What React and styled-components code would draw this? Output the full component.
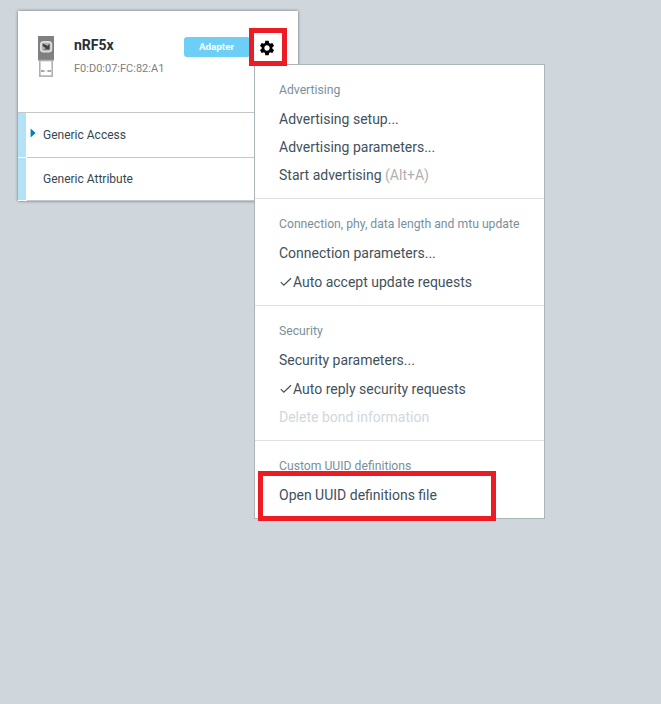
import React from 'react';
import styled, { createGlobalStyle } from 'styled-components';
import { MdSettings } from 'react-icons/md';

const GlobalStyle = createGlobalStyle`
  * { box-sizing: border-box; }
  body {
    margin: 0;
    background: #cfd7dd;
    font-family: Roboto, "Liberation Sans", sans-serif;
    color: #3f515b;
  }
`;

const Page = styled.main`
  width: 661px;
  height: 704px;
  padding: 11px 18px;
  overflow: hidden;
  background: #cfd7dd;
`;

const Card = styled.section`
  position: relative;
  width: 280px;
  height: 190px;
  background: #fff;
  box-shadow: 0 0 3px rgba(0, 0, 0, 0.5);
`;

const CardHeader = styled.header`
  display: flex;
  align-items: flex-start;
  height: 101px;
  padding: 25px 11px 0 20px;
`;

const DeviceInfo = styled.div`
  width: 110px;
  margin: -1px 0 0 20px;
`;

const DeviceName = styled.div`
  font-size: 14px;
  font-weight: 700;
  line-height: 20px;
  color: #263238;
`;

const DeviceAddress = styled.div`
  margin-top: 5px;
  font-size: 11px;
  line-height: 18px;
  white-space: nowrap;
  color: #808080;
`;

const Badge = styled.span`
  flex: none;
  width: 66px;
  height: 20px;
  margin-top: 1px;
  padding-right: 1px;
  border-radius: 3px;
  background: #6dcff6;
  color: #fff;
  font-size: 9.8px;
  font-weight: 700;
  line-height: 20px;
  text-align: center;
`;

const GearButton = styled.button`
  display: flex;
  flex: none;
  width: 18px;
  height: 18px;
  margin: 3px 0 0 8px;
  padding: 0;
  border: 0;
  background: none;
  color: #000;
  font-size: 18px;
`;

const ServiceRow = styled.div`
  display: flex;
  height: ${(p) => p.$height}px;
`;

const ServiceBar = styled.div`
  width: 8px;
  margin-bottom: 1px;
  background: #b3e1f5;
`;

const ServiceContent = styled.div`
  display: flex;
  flex: 1;
  align-items: center;
  margin-left: 1px;
  border-bottom: 1px solid #c4c6c8;
  font-size: 12px;
  color: #37474f;
`;

const ServiceList = styled.div`
  border-top: 1px solid #c4c6c8;
`;

const ArrowSlot = styled.span`
  display: flex;
  width: 16px;
  padding-left: 3px;
  margin-top: -4px;
`;

const Menu = styled.div`
  position: absolute;
  top: 53px;
  left: 236px;
  width: 291px;
  height: 455px;
  border: 1px solid #aab5ba;
  background: #fff;
`;

const MenuSection = styled.div`
  padding: 10px 24px 9px;
  & + & { border-top: 1px solid #dfe2e4; }
`;

const MenuHeading = styled.div`
  height: 30px;
  font-size: 12.2px;
  line-height: 30px;
  white-space: nowrap;
  color: #78909c;
`;

const MenuItem = styled.div`
  display: flex;
  align-items: center;
  height: ${(p) => (p.$checked ? 29 : 28)}px;
  font-size: 14px;
  white-space: pre;
  color: ${(p) => (p.$disabled ? '#cfd8dc' : '#3f515b')};
`;

const Shortcut = styled.span`
  color: #b0b0b0;
`;

const CheckSlot = styled.span`
  display: flex;
  width: 14px;
`;

const Highlight = styled.div`
  position: absolute;
  left: ${(p) => p.$x}px;
  top: ${(p) => p.$y}px;
  width: ${(p) => p.$w}px;
  height: ${(p) => p.$h}px;
  border: 5px solid #ed1c24;
  pointer-events: none;
`;

const Dongle = () => (
  <svg width="16" height="41" viewBox="0 0 16 41">
    <rect width="16" height="24.5" fill="#808080" />
    <rect x="2.9" y="5.9" width="10.4" height="9.8" rx="2.6" fill="#aaa" stroke="#dedede" strokeWidth="1.8" />
    <path d="M4.3 7.2h7.4v7H4.3z" fill="#b8b8b8" />
    <path d="M4.6 7.6 L8 9 L9.5 9.8 L11.6 7.8 V13.6 H5 L7.8 12.2 L4.8 10.2z" fill="#424242" />
    <rect x="1.8" y="24.5" width="12.4" height="15.6" fill="#fff" stroke="#b0b0b0" strokeWidth="1.6" />
    <path d="M3 35h3.5M9.5 35H13" stroke="#8a8a8a" strokeWidth="1.7" />
    <path d="M7.2 35h1.6" stroke="#ddd" strokeWidth="1.2" />
  </svg>
);

const Check = () => (
  <svg width="14" height="14" viewBox="0 0 14 14" fill="none" stroke="#3f515b" strokeWidth="1.2">
    <path d="M1.8 7.2l3 3L12 3.2" />
  </svg>
);

const sections = [
  {
    title: 'Advertising',
    items: [
      { label: 'Advertising setup...' },
      { label: 'Advertising parameters...' },
      { label: 'Start advertising ', shortcut: '(Alt+A)' },
    ],
  },
  {
    title: 'Connection, phy, data length and mtu update',
    items: [{ label: 'Connection parameters...' }, { label: 'Auto accept update requests', checked: true }],
  },
  {
    title: 'Security',
    items: [
      { label: 'Security parameters...' },
      { label: 'Auto reply security requests', checked: true },
      { label: 'Delete bond information', disabled: true },
    ],
  },
  { title: 'Custom UUID definitions', items: [{ label: 'Open UUID definitions file' }] },
];

export default function App() {
  return (
    <Page>
      <GlobalStyle />
      <Card>
        <CardHeader>
          <Dongle />
          <DeviceInfo>
            <DeviceName>nRF5x</DeviceName>
            <DeviceAddress>F0:D0:07:FC:82:A1</DeviceAddress>
          </DeviceInfo>
          <Badge>Adapter</Badge>
          <GearButton aria-label="Adapter settings">
            <MdSettings />
          </GearButton>
        </CardHeader>
        <ServiceList>
          <ServiceRow $height={45}>
            <ServiceBar />
            <ServiceContent>
              <ArrowSlot>
                <svg width="6" height="10" viewBox="0 0 6 10">
                  <path d="M0.6 0.5 L5.6 5 L0.6 9.5z" fill="#0080b7" />
                </svg>
              </ArrowSlot>
              Generic Access
            </ServiceContent>
          </ServiceRow>
          <ServiceRow $height={43}>
            <ServiceBar />
            <ServiceContent>
              <ArrowSlot />
              Generic Attribute
            </ServiceContent>
          </ServiceRow>
        </ServiceList>
        <Menu>
          {sections.map((section) => (
            <MenuSection key={section.title}>
              <MenuHeading>{section.title}</MenuHeading>
              {section.items.map((item) => (
                <MenuItem key={item.label} $checked={item.checked} $disabled={item.disabled}>
                  {item.checked && (
                    <CheckSlot>
                      <Check />
                    </CheckSlot>
                  )}
                  {item.label}
                  {item.shortcut && <Shortcut>{item.shortcut}</Shortcut>}
                </MenuItem>
              ))}
            </MenuSection>
          ))}
        </Menu>
        <Highlight $x={231} $y={17} $w={38} $h={38} />
        <Highlight $x={240} $y={460} $w={238} $h={50} />
      </Card>
    </Page>
  );
}
